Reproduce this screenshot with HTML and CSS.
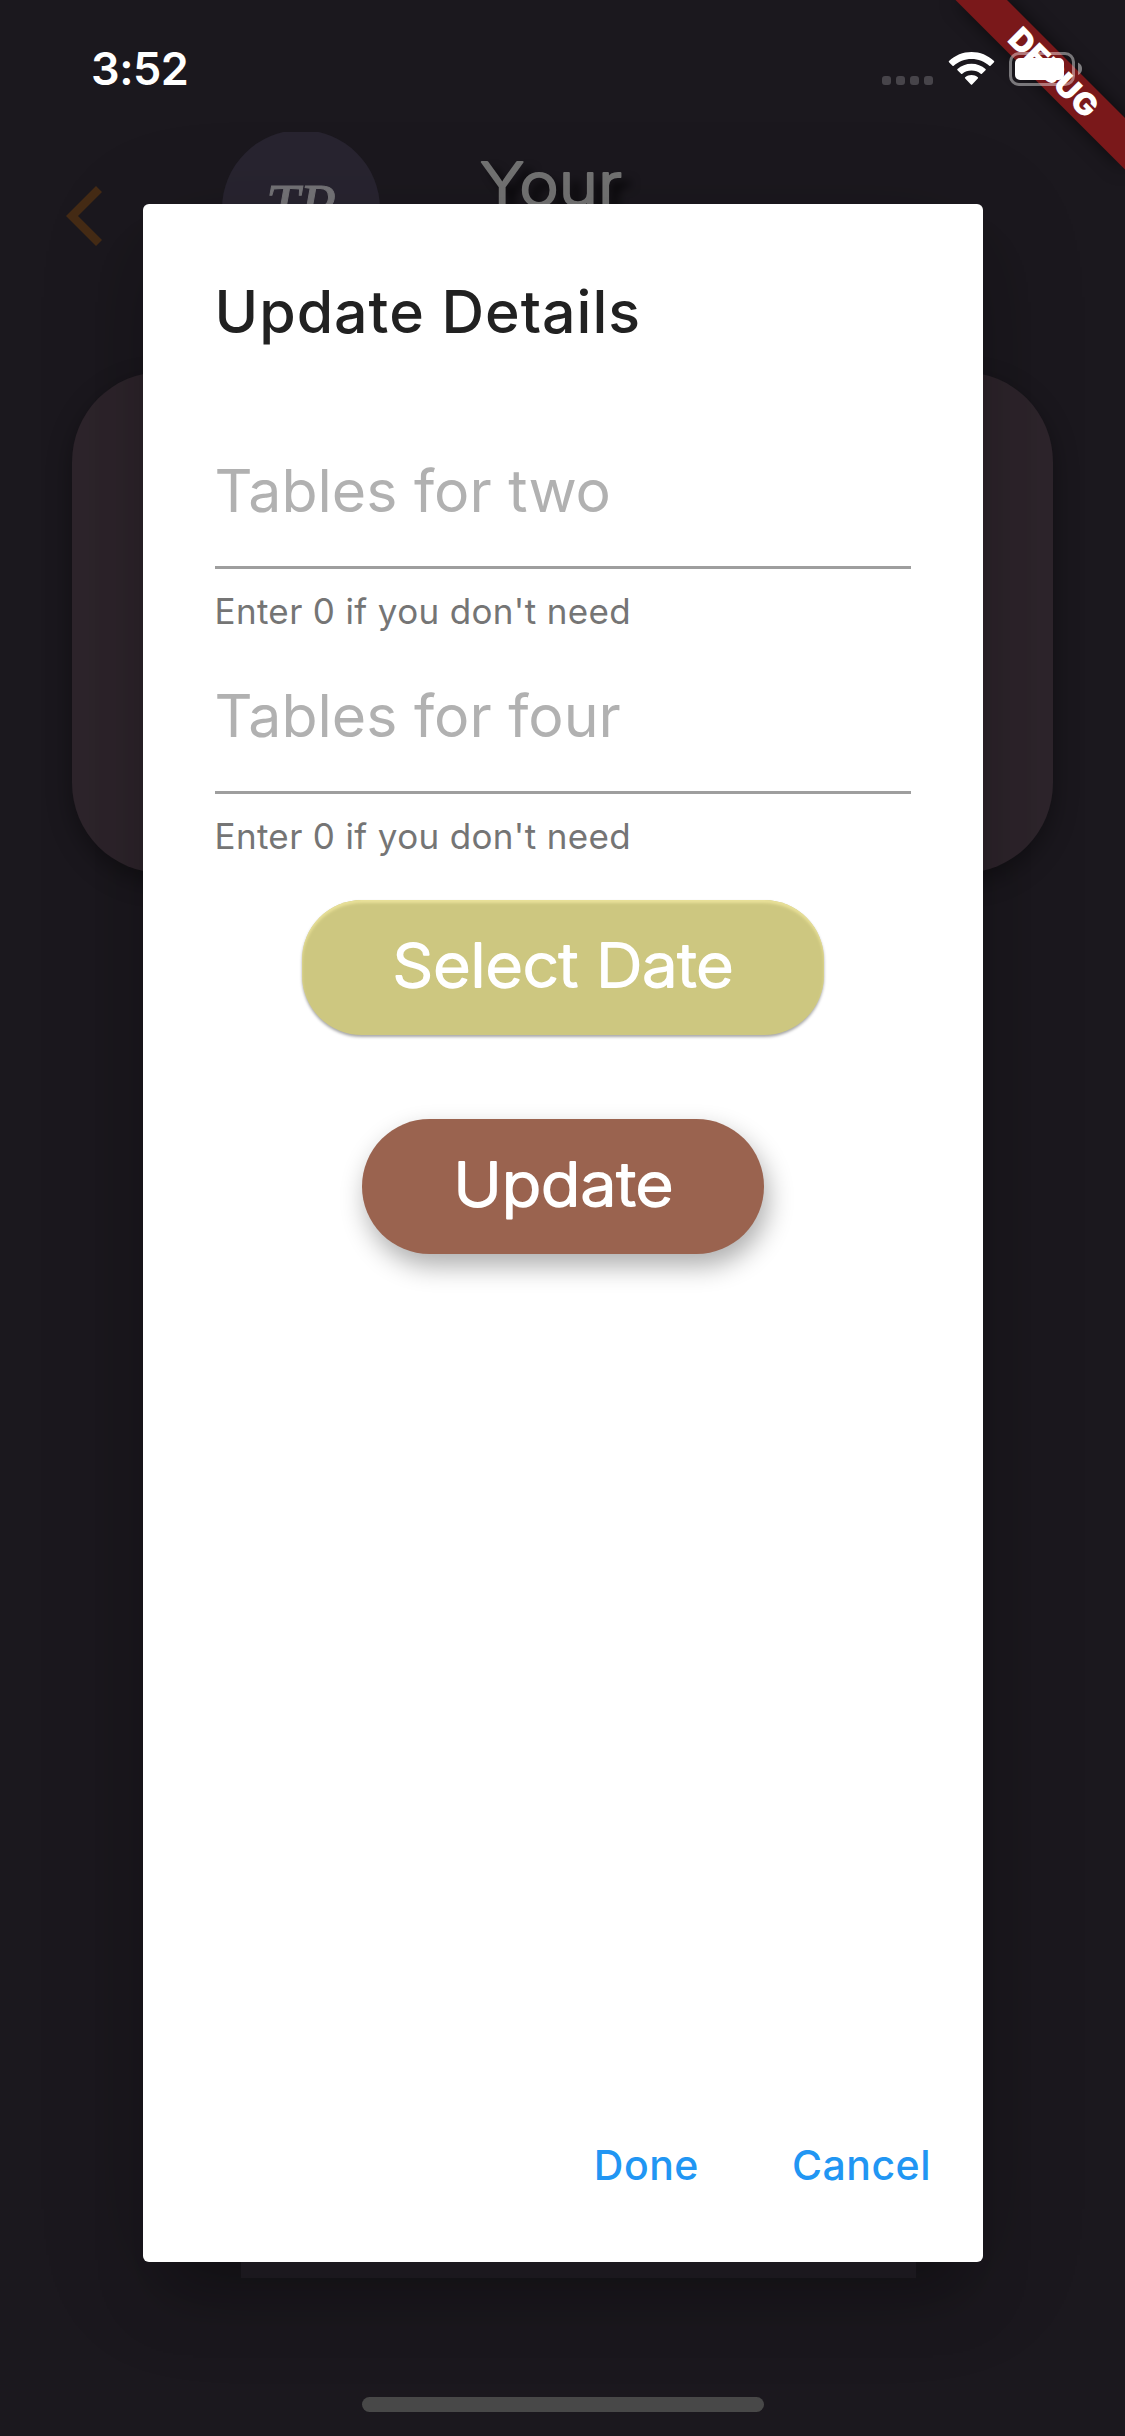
FILE: index.html
```html
<!DOCTYPE html>
<html lang="en">
<head>
<meta charset="utf-8">
<title>Update Details</title>
<link rel="stylesheet" href="styles.css">
</head>
<body>
<div class="screen">
  <div class="page">
    <header class="page-header">
      <svg class="back" width="36" height="60" viewBox="0 0 36 60"><path d="M30 0l6 6-24 24 24 24-6 6L0 30z"/></svg>
      <div class="logo"><div class="logo-disc"><span>TP</span></div></div>
      <svg class="heading" width="180" height="80" viewBox="0 0 180 80"><text class="round" x="2" y="63.500" textLength="142" lengthAdjust="spacingAndGlyphs">Your</text></svg>
    </header>
    <section class="page-card"></section>
  </div>

  <svg class="ribbon" width="200" height="200" viewBox="0 0 200 200">
    <path class="ribbon-band" d="M30.500 0H82L200 118V169.500z"/>
    <text class="ribbon-text" transform="translate(128.500 72.500) rotate(45)" x="0" y="11" text-anchor="middle" textLength="112" lengthAdjust="spacingAndGlyphs">DEBUG</text>
  </svg>

  <div class="status">
    <span class="time">3:52</span>
    <svg width="202" height="34" viewBox="0 0 202 34">
      <g fill="#47444a"><rect y="24" width="9" height="9" rx="3"/><rect x="14" y="24" width="9" height="9" rx="3"/><rect x="28" y="24" width="9" height="9" rx="3"/><rect x="42" y="24" width="9" height="9" rx="3"/></g>
      <g fill="#fff">
        <path d="M89.500 0C98 0 106 3.300 112 9q.6.600 0 1.300l-3.500 3.500q-.6.500-1.200 0C102.500 9.500 96.300 7 89.500 7S76.500 9.500 71.700 13.800q-.6.500-1.200 0L67 10.300q-.6-.7 0-1.300C73 3.300 81 0 89.500 0z"/>
        <path d="M89.500 11.700c5.400 0 10.300 2 14 5.300q.7.600 0 1.300l-3.600 3.500q-.6.600-1.200 0c-2.500-2-5.700-3.200-9.200-3.200s-6.700 1.200-9.200 3.200q-.6.600-1.200 0l-3.600-3.500q-.7-.7 0-1.300c3.700-3.300 8.600-5.300 14-5.300z"/>
        <path d="M89.500 23c2.400 0 4.600.8 6.300 2.200q.7.600 0 1.300l-5.700 5.900q-.6.500-1.200 0l-5.700-5.900q-.7-.7 0-1.300c1.700-1.400 3.900-2.200 6.300-2.200z"/>
        <rect x="133" y="6" width="49" height="22" rx="5"/>
      </g>
      <rect x="128.500" y="1.500" width="63" height="31" rx="8.500" fill="none" stroke="#fff" stroke-opacity=".42" stroke-width="3"/>
      <path d="M196 10.500q4 2 4 6.300t-4 6.300z" fill="#fff" fill-opacity=".45"/>
    </svg>
  </div>

  <div class="strip"></div>
  <div class="dialog">
    <h1>Update Details</h1>
    <div class="field"><span class="hint">Tables for two</span></div>
    <p class="helper">Enter 0 if you don't need</p>
    <div class="field"><span class="hint">Tables for four</span></div>
    <p class="helper">Enter 0 if you don't need</p>
    <button class="btn btn-date"><svg width="400" height="135" viewBox="0 0 400 135"><text class="round" x="200" y="87" text-anchor="middle" textLength="341" lengthAdjust="spacingAndGlyphs">Select Date</text></svg></button>
    <button class="btn btn-update"><svg width="300" height="135" viewBox="0 0 300 135"><text class="round" x="150.500" y="86.500" text-anchor="middle" textLength="220" lengthAdjust="spacingAndGlyphs">Update</text></svg></button>
    <div class="actions"><span class="done">Done</span><span class="cancel">Cancel</span></div>
  </div>
  <div class="home"></div>
</div>
</body>
</html>
```
FILE: styles.css
```css
* { box-sizing: border-box; }
body { margin: 0; background: #1b181e; font-family: Inter, "Liberation Sans", sans-serif; }
.screen { position: relative; width: 1125px; height: 2436px; overflow: hidden; background: #1b181e; }

.page-header { display: flex; align-items: flex-start; height: 372px; padding-left: 66px; }
.back { margin-top: 186px; fill: #452b15; }
.logo { width: 158px; height: 150px; margin: 132px 0 0 120px; overflow: hidden; }
.logo-disc { width: 158px; height: 158px; margin-top: -2px; border-radius: 50%; background: #282430; text-align: center; }
.logo-disc span { display: block; padding-top: 45px; font: italic 60px/60px "Liberation Serif", serif; color: #757478; -webkit-text-stroke: 1px #757478; }
.heading { margin: 142px 0 0 98px; overflow: visible; }
.heading .round { fill: #737373; stroke: #737373; filter: drop-shadow(9px 9px 5px rgba(0, 0, 0, .7)); }
.page-card { height: 501px; margin: 0 72px; border-radius: 90px; background: #2d242b; box-shadow: 0 9px 24px rgba(0, 0, 0, .35); }

.round { font: 300 61px Inter, "Liberation Sans", sans-serif; stroke-width: 2px; stroke-linejoin: round; fill: #fff; stroke: #fff; }

.ribbon { position: absolute; top: 0; right: 0; }
.ribbon-band { fill: #7a181a; filter: drop-shadow(0 0 9px rgba(0, 0, 0, .6)); }
.ribbon-text { font: 900 31px Inter, sans-serif; fill: #fff; }

.status { position: absolute; top: 0; left: 0; width: 1125px; padding: 52px 41px 0 91px; display: flex; justify-content: space-between; }
.time { font-size: 45px; font-weight: 600; line-height: 34px; letter-spacing: -.5px; color: #fff; }

.strip { position: absolute; left: 241px; top: 2262px; width: 675px; height: 16px; background: #1b181e; z-index: 2; }
.dialog {
  position: absolute; left: 142.500px; top: 204px; width: 840px; height: 2058px; padding: 72px 72px 0;
  display: flex; flex-direction: column; border-radius: 6px; background: #fff;
  box-shadow: 0 48px 60px -20px rgba(0, 0, 0, .28), 0 20px 110px rgba(0, 0, 0, .15);
}
h1 { margin: 0; font-size: 59px; font-weight: 460; line-height: 72px; letter-spacing: 1px; color: #212121; }
.field { height: 145px; border-bottom: 3px solid #9e9e9e; }
h1 + .field { margin-top: 76px; }
.hint { display: block; padding-top: 31px; font-size: 59px; line-height: 72px; letter-spacing: 0; color: #b1b1b1; }
.helper { margin: 0; height: 80px; padding-top: 20px; font-size: 35px; line-height: 44px; letter-spacing: .35px; color: #757575; }
.btn { display: block; align-self: center; height: 135px; padding: 0; border: 0; }
.btn svg { display: block; margin: 0 auto; }
.btn-date { width: 522px; margin-top: 26px; border-radius: 60px; background: #cdc780; box-shadow: inset 0 3px 3px #e9e199, 0 2px 3px rgba(0, 0, 0, .35); }
.btn-update { width: 402px; margin-top: 84px; border-radius: 68px; background: #9a634f; box-shadow: 4px 12px 26px rgba(0, 0, 0, .32); }
.actions { display: flex; justify-content: flex-end; gap: 93px; margin: auto -20.500px 69px 0; font-size: 41px; font-weight: 500; line-height: 56px; letter-spacing: .5px; color: #2196f3; }
.home { position: absolute; left: 362px; top: 2397px; width: 402px; height: 15px; border-radius: 8px; background: #484848; }
```
